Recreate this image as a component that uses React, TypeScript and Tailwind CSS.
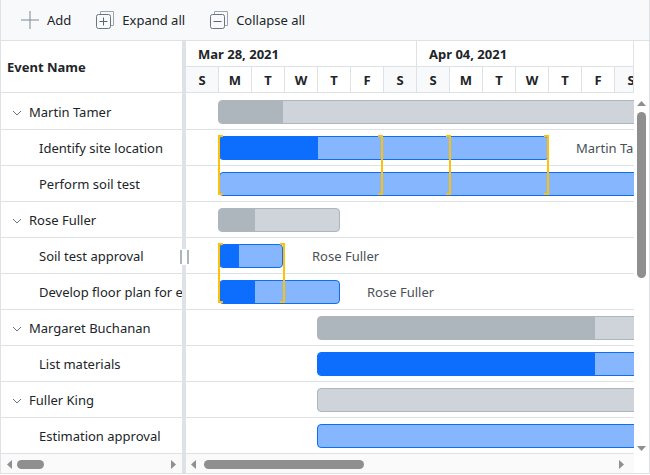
import React from "react";

const F = { fontFamily: '"Noto Sans", "Open Sans", sans-serif' };

type R = { name: string; parent?: boolean; bar: "parent" | "task"; ml: number; w: number; prog: number; label?: string; labelGap?: number };

const rows: R[] = [
  { name: "Martin Tamer", parent: true, bar: "parent", ml: 32, w: 430, prog: 64 },
  { name: "Identify site location", bar: "task", ml: 33, w: 330, prog: 98, label: "Martin Tamer", labelGap: 27 },
  { name: "Perform soil test", bar: "task", ml: 33, w: 430, prog: 0 },
  { name: "Rose Fuller", parent: true, bar: "parent", ml: 32, w: 122, prog: 36 },
  { name: "Soil test approval", bar: "task", ml: 33, w: 64, prog: 19, label: "Rose Fuller", labelGap: 29 },
  { name: "Develop floor plan for estimation", bar: "task", ml: 33, w: 121, prog: 35, label: "Rose Fuller", labelGap: 27 },
  { name: "Margaret Buchanan", parent: true, bar: "parent", ml: 131, w: 400, prog: 277 },
  { name: "List materials", bar: "task", ml: 131, w: 400, prog: 277 },
  { name: "Fuller King", parent: true, bar: "parent", ml: 131, w: 400, prog: 0 },
  { name: "Estimation approval", bar: "task", ml: 131, w: 400, prog: 0 },
];

const days = ["S", "M", "T", "W", "T", "F", "S", "S", "M", "T", "W", "T", "F", "S"];

function Chevron() {
  return (
    <svg width="10" height="6" viewBox="0 0 10 6" fill="none" stroke="#6c757d" strokeWidth="1" className="shrink-0">
      <path d="M1 1l4 4 4-4" />
    </svg>
  );
}

function Tool({ icon, label }: { icon: React.ReactNode; label: string }) {
  return (
    <div className="flex items-center gap-[8px] text-[13px] text-[#212529]">
      {icon}
      <span className="pt-[2px]">{label}</span>
    </div>
  );
}

function Stack({ minus }: { minus?: boolean }) {
  return (
    <svg width="18" height="18" viewBox="0 0 18 18" fill="none" stroke="#6c757d" strokeWidth="1">
      <path d="M4.5 3V0.5H17.5V14.5H15" stroke="#9aa5b1" />
      <rect x="0.5" y="3.5" width="14" height="14" rx="2" />
      <path d="M3.5 10.5H11.5" stroke="#5b6670" />
      {!minus && <path d="M7.5 6.5V14.5" stroke="#5b6670" />}
    </svg>
  );
}

function Bar({ r }: { r: R }) {
  const isParent = r.bar === "parent";
  const border = isParent ? "border-[#adb5bd]" : "border-[#0d6efd]";
  const bg = isParent ? "bg-[#ced4da]" : "bg-[#86b7fe]";
  const fill = isParent ? "bg-[#adb5bd]" : "bg-[#0d6efd]";
  return (
    <div className="flex items-center h-full shrink-0" style={{ marginLeft: r.ml }}>
      <div className={`h-6 shrink-0 rounded border overflow-hidden ${border} ${bg}`} style={{ width: r.w }}>
        <div className={`h-full ${fill}`} style={{ width: r.prog }} />
      </div>
      {r.label && (
        <span className="pt-[2px] text-[13px] text-[#495057] whitespace-nowrap" style={{ marginLeft: r.labelGap }}>
          {r.label}
        </span>
      )}
    </div>
  );
}

function Bracket({ left, top, right }: { left: number; top: number; right?: boolean }) {
  return (
    <div
      className={`absolute w-[5px] h-[60px] border-y-2 border-[#ffc107] ${right ? "border-r-2" : "border-l-2"}`}
      style={{ left, top }}
    />
  );
}

function Tri({ dir }: { dir: "u" | "d" | "l" | "r" }) {
  const p = { u: "M0 5L4.5 0L9 5Z", d: "M0 0L9 0L4.5 5Z", l: "M5 0V9L0 4.5Z", r: "M0 0V9L5 4.5Z" }[dir];
  const horizontal = dir === "l" || dir === "r";
  return (
    <svg width={horizontal ? 5 : 9} height={horizontal ? 9 : 5} viewBox={horizontal ? "0 0 5 9" : "0 0 9 5"} className="shrink-0">
      <path d={p} fill="#8f8f8f" />
    </svg>
  );
}

export default function App() {
  return (
    <div className="w-[650px] h-[475px] bg-white overflow-hidden" style={F}>
      <div className="w-[650px] h-[474px] border-x border-b border-[#dee2e6] flex flex-col">
        <div className="h-[41px] shrink-0 bg-[#f8f9fa] border-b border-[#dee2e6] flex items-center pl-[20px] gap-[25px]">
          <Tool
            label="Add"
            icon={
              <svg width="18" height="18" viewBox="0 0 18 18" stroke="#7b8a99" strokeWidth="1" fill="none">
                <path d="M9 0V18M0 9H18" />
              </svg>
            }
          />
          <Tool label="Expand all" icon={<Stack />} />
          <Tool label="Collapse all" icon={<Stack minus />} />
        </div>

        <div className="flex-1 min-h-0 flex">
          <div className="w-[181px] shrink-0 flex flex-col">
            <div className="h-[52px] shrink-0 border-b border-[#dee2e6] flex items-center pl-[6px] pt-[2px] text-[13px] font-bold text-[#212529]">
              Event Name
            </div>
            <div className="flex-1 min-h-0 overflow-hidden pt-[1px]">
              {rows.map((r) => (
                <div key={r.name} className="h-9 border-b border-[#dee2e6] flex items-center pt-[2px] text-[13px] text-[#212529] whitespace-nowrap overflow-hidden">
                  {r.parent ? (
                    <div className="flex items-center pl-[11px] gap-[7px]">
                      <Chevron />
                      <span>{r.name}</span>
                    </div>
                  ) : (
                    <span className="pl-[38px]">{r.name}</span>
                  )}
                </div>
              ))}
            </div>
            <div className="h-[19px] shrink-0 bg-[#fafafa] flex items-center px-[6px] pt-[1px] gap-[5px]">
              <Tri dir="l" />
              <div className="w-[27px] h-[9px] rounded-full bg-[#8f8f8f]" />
              <div className="flex-1" />
              <Tri dir="r" />
            </div>
          </div>

          <div className="relative w-[4px] shrink-0 bg-[#dee2e6]">
            <div className="absolute left-[-2px] top-[208px] w-[9px] h-[16px] bg-white py-[1px] flex justify-between">
              <div className="w-[2px] h-full bg-[#adb5bd]" />
              <div className="w-[2px] h-full bg-[#adb5bd]" />
            </div>
          </div>

          <div className="w-[448px] shrink-0 flex flex-col">
            <div className="h-[52px] shrink-0 overflow-hidden border-b border-r border-[#dee2e6]">
              <div className="flex h-[26px] border-b border-[#dee2e6] w-[500px] text-[13px] font-bold text-[#212529]">
                <div className="w-[231px] shrink-0 border-r border-[#dee2e6] pl-[12px] pt-[2px] flex items-center">Mar 28, 2021</div>
                <div className="w-[231px] shrink-0 pl-[12px] pt-[2px] flex items-center">Apr 04, 2021</div>
              </div>
              <div className="flex w-[500px] h-[25px]">
                {days.map((d, i) => (
                  <div
                    key={i}
                    className={`w-[33px] shrink-0 border-r border-[#dee2e6] flex items-center justify-center pt-[2px] text-[13px] font-bold text-[#212529] ${
                      i % 7 === 0 || i % 7 === 6 ? "bg-[#f8f9fa]" : "bg-white"
                    }`}
                  >
                    {d}
                  </div>
                ))}
              </div>
            </div>
            <div className="relative flex-1 min-h-0 overflow-hidden pt-[1px]">
              {rows.map((r) => (
                <div key={r.name} className="h-9 border-b border-[#dee2e6] flex overflow-hidden">
                  <Bar r={r} />
                </div>
              ))}
              <Bracket left={32} top={42} />
              <Bracket left={192} top={42} right />
              <Bracket left={260} top={42} right />
              <Bracket left={358} top={42} right />
              <Bracket left={32} top={150} />
              <Bracket left={94} top={150} right />
            </div>
            <div className="h-[19px] shrink-0 bg-[#fafafa] flex items-center pl-[5px] pr-[10px] pt-[1px] gap-[5px]">
              <Tri dir="l" />
              <div className="w-[160px] h-[9px] rounded-full bg-[#8f8f8f] ml-[3px]" />
              <div className="flex-1" />
              <Tri dir="r" />
            </div>
          </div>

          <div className="w-[15px] shrink-0 flex flex-col items-center pt-[60px] bg-white">
            <Tri dir="u" />
            <div className="w-[9px] h-[166px] mt-[6px] rounded-full bg-[#8f8f8f]" />
            <div className="flex-1" />
            <div className="mb-[22px]">
              <Tri dir="d" />
            </div>
          </div>
        </div>
      </div>
    </div>
  );
}
